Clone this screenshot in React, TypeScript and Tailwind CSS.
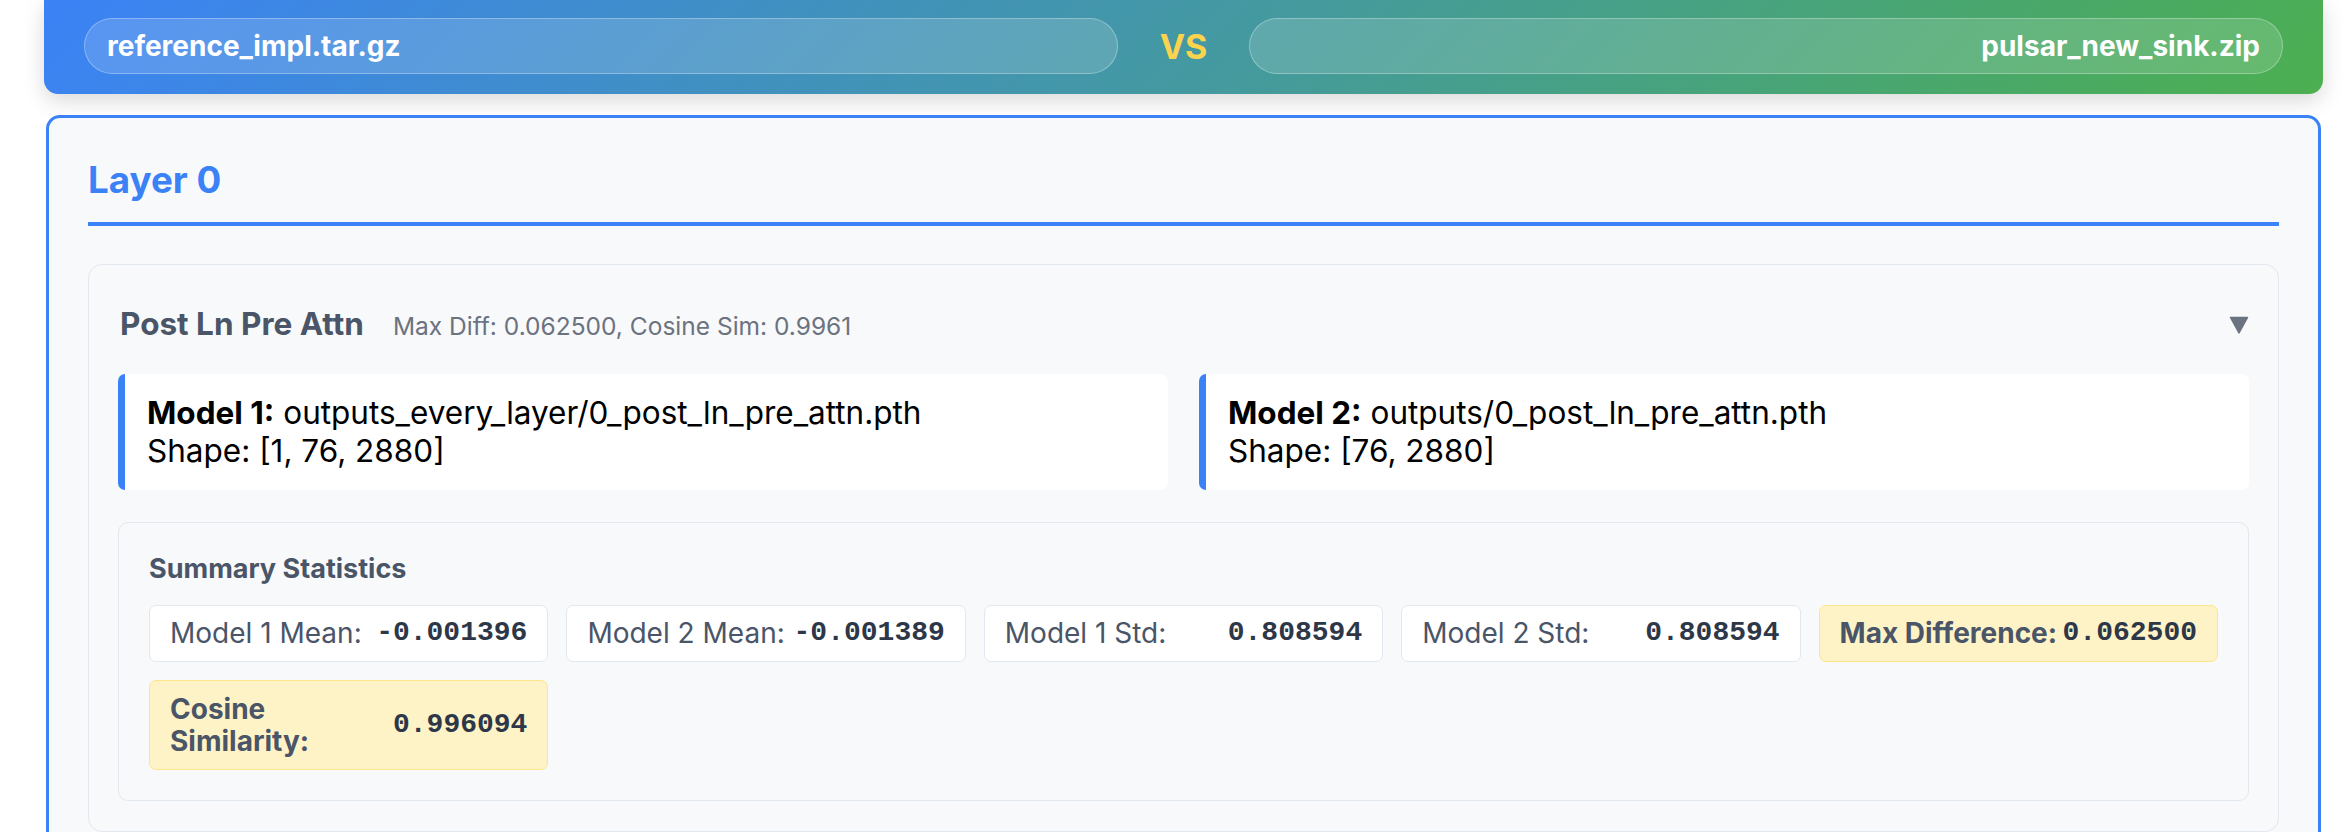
import React from 'react';

type Stat = { label: string; value: string; highlight?: boolean };

const stats: Stat[] = [
  { label: 'Model 1 Mean:', value: '-0.001396' },
  { label: 'Model 2 Mean:', value: '-0.001389' },
  { label: 'Model 1 Std:', value: '0.808594' },
  { label: 'Model 2 Std:', value: '0.808594' },
  { label: 'Max Difference:', value: '0.062500', highlight: true },
  { label: 'Cosine Similarity:', value: '0.996094', highlight: true },
];

const files = [
  { label: 'Model 1:', path: 'outputs_every_layer/0_post_ln_pre_attn.pth', shape: '[1, 76, 2880]' },
  { label: 'Model 2:', path: 'outputs/0_post_ln_pre_attn.pth', shape: '[76, 2880]' },
];

const FilePill: React.FC<{ name: string; right?: boolean }> = ({ name, right }) => (
  <div
    className={`flex h-[56px] flex-1 items-center rounded-full border-[1.75px] border-white/30 bg-white/15 px-[22px] text-[28px] font-bold text-white ${
      right ? 'justify-end' : 'justify-start'
    }`}
  >
    {name}
  </div>
);

const StatCard: React.FC<{ stat: Stat }> = ({ stat }) => (
  <div
    className={`flex items-center justify-between rounded-[7px] border-[1.75px] px-[20px] py-[11.5px] ${
      stat.highlight ? 'border-[#fde68a] bg-[#fef3c7]' : 'border-[#e2e8f0] bg-white'
    }`}
  >
    <span
      className={`text-[28px] leading-[32.5px] text-[#4a5568] ${stat.highlight ? 'font-bold' : 'font-normal'}`}
    >
      {stat.label}
    </span>
    <span className="shrink-0 font-['Liberation_Mono',monospace] text-[28px] leading-[32.5px] font-bold text-[#2d3748]">
      {stat.value}
    </span>
  </div>
);

export default function App() {
  return (
    <div className="min-h-screen bg-white pr-[23px] pl-[44px] font-['Inter',sans-serif]">
      {/* File header */}
      <header className="flex items-center gap-[42px] rounded-b-[14px] bg-[linear-gradient(135deg,#3b82f6,#4caf50)] px-[40px] pt-[18px] pb-[20px] shadow-[0_7px_21px_rgba(0,0,0,0.15)]">
        <FilePill name="reference_impl.tar.gz" />
        <span className="text-[34px] font-bold text-[#fcd34d]">VS</span>
        <FilePill name="pulsar_new_sink.zip" right />
      </header>

      {/* Layer panel */}
      <main className="mx-[2px] mt-[21px] rounded-[14px] border-[3.5px] border-[#3b82f6] bg-[#f8f9fa] px-[39px] pt-[40px] pb-[40px]">
        <h2 className="border-b-[4px] border-[#3b82f6] pb-[20px] text-[36.75px] leading-[44px] font-bold text-[#3b82f6]">
          Layer 0
        </h2>

        <section className="mt-[38px] rounded-[14px] border-[1.75px] border-[#e2e8f0] bg-[#f8f9fa] px-[29px] pt-[40px] pb-[30px]">
          <div className="flex items-center justify-between pl-[2px]">
            <div className="flex items-baseline gap-[29px]">
              <h3 className="text-[31.5px] leading-[38px] font-bold text-[#4a5568]">Post Ln Pre Attn</h3>
              <span className="text-[24.5px] text-[#6b7280]">Max Diff: 0.062500, Cosine Sim: 0.9961</span>
            </div>
            <svg width="20" height="18" viewBox="0 0 20 18" className="text-[#6b7280]">
              <path d="M1.5 1.5 L18.5 1.5 L10 17 Z" fill="currentColor" stroke="currentColor" strokeWidth="1.5" strokeLinejoin="round" />
            </svg>
          </div>

          {/* File info */}
          <div className="mt-[29px] grid grid-cols-2 gap-[31px]">
            {files.map((f) => (
              <div
                key={f.label}
                className="rounded-[7px] border-l-[7px] border-[#3b82f6] bg-white py-[20px] pr-[21px] pl-[22px] text-[31.5px] leading-[38px] text-black"
              >
                <div>
                  <span className="font-bold">{f.label}</span> {f.path}
                </div>
                <div>Shape: {f.shape}</div>
              </div>
            ))}
          </div>

          {/* Summary */}
          <div className="mt-[32px] rounded-[10px] border-[1.75px] border-[#e2e8f0] bg-[#f8f9fa] px-[30px] pt-[30px] pb-[30px]">
            <h4 className="mb-[20px] text-[27px] leading-[32px] font-bold text-[#4a5568]">Summary Statistics</h4>
            <div className="grid grid-cols-5 gap-[18px]">
              {stats.map((s) => (
                <StatCard key={s.label} stat={s} />
              ))}
            </div>
          </div>
        </section>
      </main>
    </div>
  );
}
